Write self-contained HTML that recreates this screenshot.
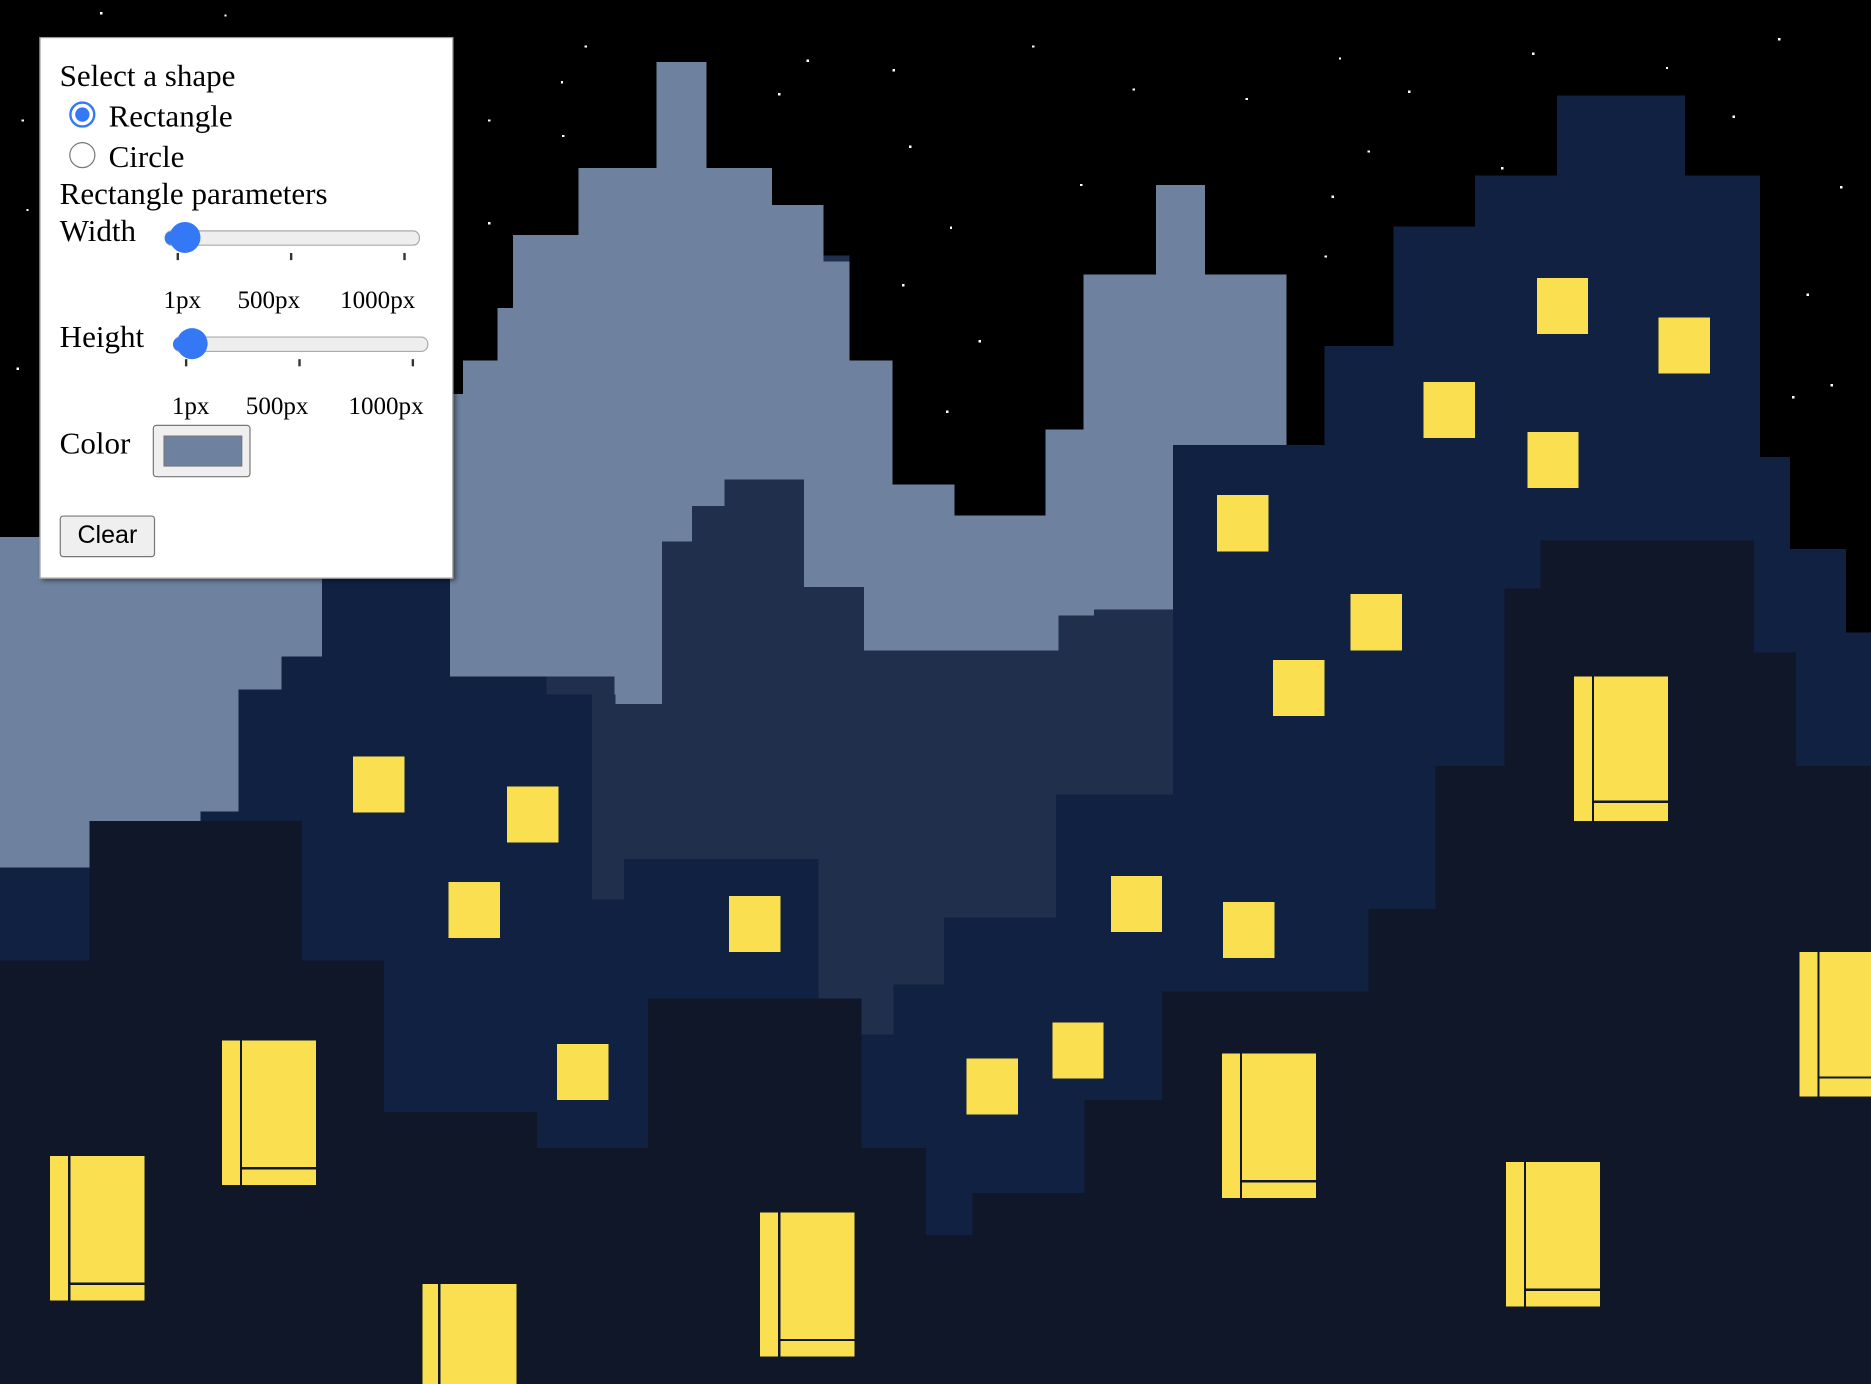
<!DOCTYPE html>
<html><head><meta charset="utf-8"><style>
html,body{margin:0;padding:0;background:#000;overflow:hidden;width:1871px;height:1384px}
#w{position:absolute;left:0;top:0;width:1568px;height:1160px;transform:scale(1.19324);transform-origin:0 0;overflow:hidden}
svg{position:absolute;left:0;top:0}
#p{position:absolute;left:33px;top:31px;width:345px;height:452px;background:#fff;border:1px solid #999;box-shadow:2px 2px 4px rgba(0,0,0,.5);font-family:"Liberation Serif",serif;font-size:26px;color:#000}
.t{position:absolute;white-space:nowrap}
.sm{font-size:21px}
</style></head><body><div id="w">
<svg width="1568" height="1160" viewBox="0 0 1568 1160" shape-rendering="crispEdges">
<rect width="1568" height="1160" fill="#000"/>
<g fill="#fff">
<rect x="84" y="10" width="2" height="2"/><rect x="188" y="12" width="2" height="2"/><rect x="18" y="100" width="2" height="2"/><rect x="22" y="175" width="2" height="2"/><rect x="14" y="308" width="2" height="2"/>
<rect x="490" y="38" width="2" height="2"/><rect x="470" y="68" width="2" height="2"/><rect x="409" y="100" width="2" height="2"/><rect x="409" y="186" width="2" height="2"/><rect x="471" y="113" width="2" height="2"/>
<rect x="676" y="50" width="2" height="2"/><rect x="652" y="78" width="2" height="2"/><rect x="748" y="58" width="2" height="2"/><rect x="762" y="122" width="2" height="2"/><rect x="865" y="38" width="2" height="2"/><rect x="949" y="74" width="2" height="2"/><rect x="905" y="154" width="2" height="2"/><rect x="796" y="190" width="2" height="2"/><rect x="756" y="238" width="2" height="2"/><rect x="820" y="285" width="2" height="2"/><rect x="793" y="344" width="2" height="2"/>
<rect x="1044" y="82" width="2" height="2"/><rect x="1122" y="48" width="2" height="2"/><rect x="1180" y="76" width="2" height="2"/><rect x="1146" y="126" width="2" height="2"/><rect x="1116" y="164" width="2" height="2"/><rect x="1110" y="214" width="2" height="2"/><rect x="1284" y="44" width="2" height="2"/><rect x="1396" y="56" width="2" height="2"/><rect x="1490" y="32" width="2" height="2"/><rect x="1452" y="97" width="2" height="2"/><rect x="1542" y="156" width="2" height="2"/><rect x="1514" y="246" width="2" height="2"/><rect x="1534" y="322" width="2" height="2"/><rect x="1502" y="332" width="2" height="2"/><rect x="1258" y="140" width="2" height="2"/>
</g>
<g fill="#6e82a0">
<rect x="0" y="450" width="380" height="300"/>
<rect x="380" y="330" width="10" height="300"/>
<rect x="388" y="302" width="40" height="400"/>
<rect x="417" y="258" width="20" height="400"/>
<rect x="430" y="197" width="60" height="400"/>
<rect x="485" y="141" width="70" height="450"/>
<rect x="550" y="52" width="42" height="500"/>
<rect x="592" y="141" width="55" height="400"/>
<rect x="647" y="172" width="43" height="400"/>
<rect x="690" y="218" width="22" height="400"/>
<rect x="712" y="302" width="36" height="400"/>
<rect x="748" y="406" width="52" height="300"/>
<rect x="800" y="432" width="80" height="300"/>
<rect x="876" y="360" width="35" height="300"/>
<rect x="908" y="230" width="65" height="400"/>
<rect x="969" y="155" width="41" height="400"/>
<rect x="1010" y="230" width="68" height="400"/>
</g>
<rect x="690" y="214" width="22" height="5" fill="#1f2f4c"/>
<g fill="#1f2f4c">
<rect x="458" y="567" width="57" height="300"/>
<rect x="496" y="582" width="20" height="300"/>
<rect x="515" y="590" width="41" height="300"/>
<rect x="555" y="454" width="31" height="400"/>
<rect x="580" y="424" width="30" height="400"/>
<rect x="607" y="402" width="67" height="400"/>
<rect x="674" y="492" width="50" height="400"/>
<rect x="724" y="545" width="163" height="400"/>
<rect x="887" y="516" width="30" height="400"/>
<rect x="917" y="511" width="70" height="400"/>
</g>
<g fill="#112142">
<rect x="270" y="485" width="107" height="500"/>
<rect x="236" y="550" width="40" height="400"/>
<rect x="200" y="578" width="40" height="400"/>
<rect x="168" y="680" width="40" height="300"/>
<rect x="0" y="727" width="80" height="100"/>
<rect x="377" y="567" width="81" height="400"/>
<rect x="458" y="582" width="38" height="400"/>
<rect x="496" y="754" width="30" height="250"/>
<rect x="523" y="720" width="163" height="250"/>
<rect x="983" y="373" width="130" height="600"/>
<rect x="1110" y="290" width="60" height="600"/>
<rect x="1168" y="190" width="70" height="600"/>
<rect x="1236" y="147" width="70" height="600"/>
<rect x="1305" y="80" width="107" height="600"/>
<rect x="1412" y="147" width="63" height="600"/>
<rect x="1475" y="383" width="25" height="500"/>
<rect x="1500" y="460" width="47" height="500"/>
<rect x="1547" y="530" width="21" height="500"/>
<rect x="885" y="666" width="100" height="400"/>
<rect x="791" y="769" width="100" height="300"/>
<rect x="749" y="825" width="50" height="300"/>
<rect x="722" y="867" width="30" height="300"/>
</g>
<g fill="#0f1729">
<rect x="0" y="805" width="75" height="400"/>
<rect x="75" y="688" width="178" height="500"/>
<rect x="253" y="805" width="69" height="400"/>
<rect x="322" y="932" width="128" height="300"/>
<rect x="450" y="962" width="93" height="300"/>
<rect x="543" y="837" width="179" height="400"/>
<rect x="722" y="962" width="54" height="300"/>
<rect x="776" y="1035" width="39" height="200"/>
<rect x="815" y="1000" width="94" height="200"/>
<rect x="909" y="922" width="65" height="300"/>
<rect x="974" y="831" width="173" height="400"/>
<rect x="1147" y="762" width="56" height="400"/>
<rect x="1203" y="642" width="58" height="600"/>
<rect x="1261" y="493" width="30" height="700"/>
<rect x="1291" y="453" width="179" height="800"/>
<rect x="1470" y="547" width="35" height="700"/>
<rect x="1505" y="642" width="63" height="600"/>
</g>
<g fill="#fae050">
<rect x="296" y="634" width="43" height="47"/><rect x="425" y="659" width="43" height="47"/><rect x="376" y="739" width="43" height="47"/><rect x="611" y="751" width="43" height="47"/><rect x="467" y="875" width="43" height="47"/>
<rect x="1020" y="415" width="43" height="47"/><rect x="1132" y="498" width="43" height="47"/><rect x="1067" y="553" width="43" height="47"/><rect x="1193" y="320" width="43" height="47"/><rect x="1288" y="233" width="43" height="47"/><rect x="1390" y="266" width="43" height="47"/><rect x="1280" y="362" width="43" height="47"/>
<rect x="931" y="734" width="43" height="47"/><rect x="1025" y="756" width="43" height="47"/><rect x="882" y="857" width="43" height="47"/><rect x="810" y="887" width="43" height="47"/>
</g>
<g>
<g transform="translate(42,969)"><rect width="79" height="121" fill="#fae050"/><rect x="15" width="2" height="121" fill="#0f1729"/><rect x="17" y="106" width="62" height="2" fill="#0f1729"/></g>
<g transform="translate(186,872)"><rect width="79" height="121" fill="#fae050"/><rect x="15" width="2" height="121" fill="#0f1729"/><rect x="17" y="106" width="62" height="2" fill="#0f1729"/></g>
<g transform="translate(354,1076)"><rect width="79" height="121" fill="#fae050"/><rect x="13" width="2" height="121" fill="#0f1729"/></g>
<g transform="translate(637,1016)"><rect width="79" height="121" fill="#fae050"/><rect x="15" width="2" height="121" fill="#0f1729"/><rect x="17" y="106" width="62" height="2" fill="#0f1729"/></g>
<g transform="translate(1024,883)"><rect width="79" height="121" fill="#fae050"/><rect x="15" width="2" height="121" fill="#0f1729"/><rect x="17" y="106" width="62" height="2" fill="#0f1729"/></g>
<g transform="translate(1262,974)"><rect width="79" height="121" fill="#fae050"/><rect x="15" width="2" height="121" fill="#0f1729"/><rect x="17" y="106" width="62" height="2" fill="#0f1729"/></g>
<g transform="translate(1319,567)"><rect width="79" height="121" fill="#fae050"/><rect x="15" width="2" height="121" fill="#0f1729"/><rect x="17" y="104" width="62" height="2" fill="#0f1729"/></g>
<g transform="translate(1508,798)"><rect width="79" height="121" fill="#fae050"/><rect x="15" width="2" height="121" fill="#0f1729"/><rect x="17" y="104" width="62" height="2" fill="#0f1729"/></g>
</g>
</svg>
<div id="p">
<div class="t" style="left:16px;top:17px">Select a shape</div>
<div style="position:absolute;left:24px;top:53px;width:22px;height:22px;border:2px solid #3478f6;border-radius:50%;box-sizing:border-box;background:#fff"><div style="position:absolute;left:3px;top:3px;width:12px;height:12px;border-radius:50%;background:#3478f6"></div></div>
<div class="t" style="left:57px;top:51px">Rectangle</div>
<div style="position:absolute;left:24px;top:87px;width:22px;height:22px;border:1.5px solid #777;border-radius:50%;box-sizing:border-box"></div>
<div class="t" style="left:57px;top:85px">Circle</div>
<div class="t" style="left:16px;top:116px">Rectangle parameters</div>
<div class="t" style="left:16px;top:147px">Width</div>
<div style="position:absolute;left:104px;top:161px;width:212px;height:11px;border:1px solid #aaa;border-radius:6px;background:#eee"></div>
<div style="position:absolute;left:104px;top:162px;width:14px;height:11px;border-radius:6px;background:#3478f6"></div>
<div style="position:absolute;left:108px;top:154px;width:26px;height:26px;border-radius:50%;background:#3478f6"></div>
<div style="position:absolute;left:114px;top:180px;width:2px;height:6px;background:#333"></div>
<div style="position:absolute;left:209px;top:180px;width:2px;height:6px;background:#333"></div>
<div style="position:absolute;left:304px;top:180px;width:2px;height:6px;background:#333"></div>
<div class="t sm" style="left:103px;top:207px">1px</div>
<div class="t sm" style="left:165px;top:207px">500px</div>
<div class="t sm" style="left:251px;top:207px">1000px</div>
<div class="t" style="left:16px;top:236px">Height</div>
<div style="position:absolute;left:111px;top:250px;width:212px;height:11px;border:1px solid #aaa;border-radius:6px;background:#eee"></div>
<div style="position:absolute;left:111px;top:251px;width:14px;height:11px;border-radius:6px;background:#3478f6"></div>
<div style="position:absolute;left:114px;top:243px;width:26px;height:26px;border-radius:50%;background:#3478f6"></div>
<div style="position:absolute;left:121px;top:269px;width:2px;height:6px;background:#333"></div>
<div style="position:absolute;left:216px;top:269px;width:2px;height:6px;background:#333"></div>
<div style="position:absolute;left:311px;top:269px;width:2px;height:6px;background:#333"></div>
<div class="t sm" style="left:110px;top:296px">1px</div>
<div class="t sm" style="left:172px;top:296px">500px</div>
<div class="t sm" style="left:258px;top:296px">1000px</div>
<div class="t" style="left:16px;top:325px">Color</div>
<div style="position:absolute;left:94px;top:324px;width:82px;height:44px;border:1.5px solid #777;border-radius:3px;background:#efefef;box-sizing:border-box"><div style="position:absolute;left:8px;top:8px;width:64px;height:24px;background:#6e82a0;border:1.5px solid #777"></div></div>
<div style="position:absolute;left:16px;top:400px;width:80px;height:35px;border:1.5px solid #777;border-radius:3px;background:#efefef;box-sizing:border-box;font-family:'Liberation Sans',sans-serif;font-size:21px;text-align:center;line-height:31px">Clear</div>
</div>
</div></body></html>
